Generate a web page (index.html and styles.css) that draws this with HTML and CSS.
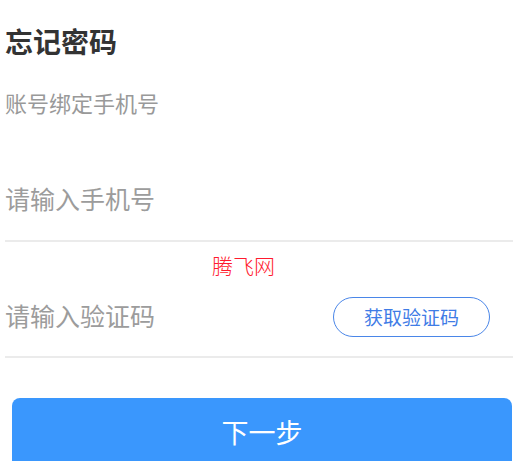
FILE: index.html
```html
<!DOCTYPE html>
<html lang="zh-CN">
<head>
<meta charset="utf-8">
<title>忘记密码</title>
<link rel="stylesheet" href="styles.css">
</head>
<body>
<main class="page">
  <h1 class="title">忘记密码</h1>
  <p class="subtitle">账号绑定手机号</p>
  <div class="field">
    <input class="field-input" type="tel" placeholder="请输入手机号">
  </div>
  <div class="watermark">腾飞网</div>
  <div class="field">
    <input class="field-input" type="text" placeholder="请输入验证码">
    <button class="code-btn" type="button">获取验证码</button>
  </div>
  <button class="next-btn" type="button">下一步</button>
</main>
</body>
</html>
```

FILE: styles.css
```css
html, body {
  margin: 0;
  padding: 0;
  background: #ffffff;
  overflow: hidden;
}
body {
  font-family: "Noto Sans CJK SC", "Noto Sans", sans-serif;
}
.page {
  display: flex;
  flex-direction: column;
  padding-left: 5px;
  padding-top: 21px;
}
.title {
  margin: 0;
  font-size: 28px;
  line-height: 40px;
  font-weight: 700;
  color: #333333;
}
.subtitle {
  margin: 26px 0 0 0;
  font-size: 22px;
  line-height: 30px;
  color: #999999;
}
.field {
  display: flex;
  align-items: center;
  border-bottom: 2px solid #ebebeb;
  height: 81px;
  box-sizing: content-box;
}
.subtitle + .field {
  margin-top: 42px;
}
.field-input {
  flex: 1;
  min-width: 0;
  border: none;
  outline: none;
  padding: 0 0 4px 0;
  margin: 0;
  background: transparent;
  font-family: inherit;
  font-size: 25px;
  color: #333333;
}
.field-input::placeholder {
  color: #9c9c9c;
}
.watermark {
  margin: 10px 0 0 207px;
  font-size: 21px;
  line-height: 26px;
  color: #ff1a2e;
  font-weight: 300;
}
.watermark + .field {
  height: 78px;
}
.code-btn {
  width: 157px;
  height: 40px;
  margin-right: 23px;
  border: 1.5px solid #4a86e8;
  border-radius: 20px;
  background: #ffffff;
  color: #3f7ce6;
  font-family: inherit;
  font-size: 19px;
  padding: 0 0 2px 0;
}
.next-btn {
  margin: 40px 1px 0 7px;
  height: 72px;
  border: none;
  border-radius: 8px;
  background: #3a97fd;
  color: #ffffff;
  font-family: inherit;
  font-size: 27px;
  padding: 0 0 6px 0;
}
```
